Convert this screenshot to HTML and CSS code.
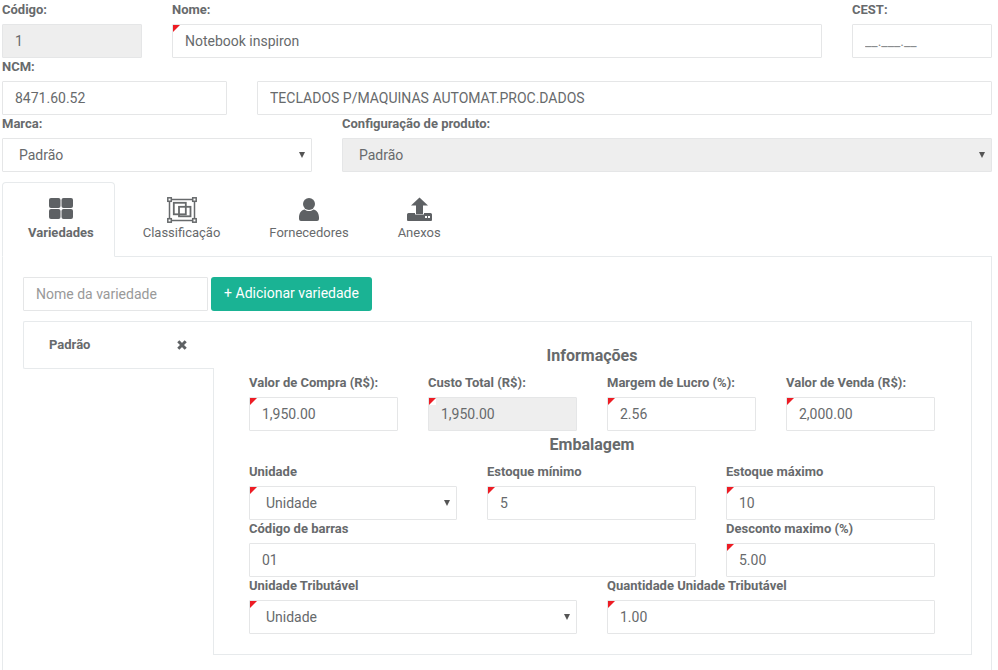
FILE: index.html
```html
<!DOCTYPE html>
<html lang="pt">
<head>
<meta charset="utf-8">
<title>Produto</title>
<link rel="stylesheet" href="styles.css">
</head>
<body>
<div class="row r1">
  <div class="field"><label>Código:</label><input class="ctl off" value="1" disabled></div>
  <div class="field req"><label>Nome:</label><input class="ctl" value="Notebook inspiron"></div>
  <div class="field"><label>CEST:</label><input class="ctl mask" value="__.___.__"></div>
</div>
<div class="row r2">
  <div class="field"><label>NCM:</label><input class="ctl" value="8471.60.52"></div>
  <div class="field"><label>&nbsp;</label><input class="ctl" value="TECLADOS P/MAQUINAS AUTOMAT.PROC.DADOS"></div>
</div>
<div class="row r3">
  <div class="field"><label>Marca:</label><div class="sel"><select class="ctl"><option>Padrão</option></select></div></div>
  <div class="field"><label>Configuração de produto:</label><div class="sel"><select class="ctl off" disabled><option>Padrão</option></select></div></div>
</div>

<div class="tabs">
  <div class="tab active">
    <svg class="ico" width="24" height="27" viewBox="0 0 24 27"><rect y="1" width="11.500" height="10" rx="2"/><rect x="12.500" y="1" width="11.500" height="10" rx="2"/><rect y="12" width="11.500" height="10" rx="2"/><rect x="12.500" y="12" width="11.500" height="10" rx="2"/></svg>
    <span>Variedades</span>
  </div>
  <div class="tab">
    <svg class="ico" width="30" height="27" viewBox="0 0 30 27"><g fill="none" stroke="#676a6c" stroke-width="1.500"><rect x="2.500" y="2.500" width="25" height="21"/><rect x="6.800" y="5.800" width="12" height="11.500" stroke-width="1.800"/><rect x="12" y="9.800" width="11.500" height="9.500" stroke-width="1.800"/><g fill="#fff" stroke-width="1.500"><rect x="0.800" y="0.800" width="3.500" height="3.500"/><rect x="25.700" y="0.800" width="3.500" height="3.500"/><rect x="0.800" y="21.700" width="3.500" height="3.500"/><rect x="25.700" y="21.700" width="3.500" height="3.500"/></g></g></svg>
    <span>Classificação</span>
  </div>
  <div class="tab">
    <svg class="ico" width="20" height="27" viewBox="0 0 20 27"><circle cx="10" cy="7" r="6"/><path d="M0 20.500c0-4.500 2.500-7.500 5.800-8 1.200 1 2.600 1.500 4.200 1.500s3-.5 4.200-1.500c3.300.5 5.800 3.500 5.800 8v1.500q0 2-2 2h-16q-2 0-2-2z"/></svg>
    <span>Fornecedores</span>
  </div>
  <div class="tab">
    <svg class="ico" width="25" height="27" viewBox="0 0 25 27"><path d="M12.500 .5l8.500 8h-5v8.500h-7v-8.500h-5z"/><path fill-rule="evenodd" d="M0 17.500q0-1.500 1.500-1.500h6.500v1.500h9v-1.500h6.500q1.500 0 1.500 1.500v5.500q0 1-1 1h-23q-1 0-1-1zM18 19h2v2h-2zM21 19h2v2h-2z"/></svg>
    <span>Anexos</span>
  </div>
</div>

<section class="pane">
  <div class="adder">
    <input class="ctl name" placeholder="Nome da variedade">
    <button class="add">+ Adicionar variedade</button>
  </div>
  <div class="variety">
    <div class="vside">
      <div class="vtab"><b>Padrão</b><svg class="x" width="10" height="10" viewBox="0 0 10 10"><path d="M1.300 1.300l7.400 7.400M8.700 1.300l-7.400 7.400"/></svg></div>
    </div>
    <div class="vbody">
      <h4>Informações</h4>
      <div class="g4">
        <div class="field req"><label>Valor de Compra (R$):</label><input class="ctl" value="1,950.00"></div>
        <div class="field req notch"><label>Custo Total (R$):</label><input class="ctl off" value="1,950.00" disabled></div>
        <div class="field req"><label>Margem de Lucro (%):</label><input class="ctl" value="2.56"></div>
        <div class="field req"><label>Valor de Venda (R$):</label><input class="ctl" value="2,000.00"></div>
      </div>
      <h4 class="h2">Embalagem</h4>
      <div class="g3">
        <div class="field req"><label>Unidade</label><div class="sel"><select class="ctl"><option>Unidade</option></select></div></div>
        <div class="field req"><label>Estoque mínimo</label><input class="ctl" value="5"></div>
        <div class="field req"><label>Estoque máximo</label><input class="ctl" value="10"></div>
        <div class="field wide"><label>Código de barras</label><input class="ctl" value="01"></div>
        <div class="field req"><label>Desconto maximo (%)</label><input class="ctl" value="5.00"></div>
      </div>
      <div class="g2">
        <div class="field req"><label>Unidade Tributável</label><div class="sel"><select class="ctl"><option>Unidade</option></select></div></div>
        <div class="field req"><label>Quantidade Unidade Tributável</label><input class="ctl" value="1.00"></div>
      </div>
    </div>
  </div>
</section>
</body>
</html>
```
FILE: styles.css
```css
* { box-sizing: border-box; }
html, body { margin: 0; padding: 0; }
body {
  width: 998px;
  height: 670px;
  overflow: hidden;
  padding: 1px 6px 0 2px;
  background: #fff;
  color: #676a6c;
  font-family: Roboto, "Liberation Sans", sans-serif;
  font-size: 14px;
}
.row { display: grid; column-gap: 30px; }
.r1 { grid-template-columns: 140px 650px 140px; }
.r2 { grid-template-columns: 225px 735px; }
.r3 { grid-template-columns: 310px 650px; }
.field { position: relative; min-width: 0; }
label {
  display: block;
  height: 23px;
  line-height: 18px;
  font-size: 13px;
  font-weight: 700;
  color: #676a6c;
}
.ctl {
  display: block;
  width: 100%;
  height: 34px;
  margin: 0;
  padding: 6px 12px;
  border: 1px solid #e5e6e7;
  border-radius: 1px;
  background: #fff;
  color: #676a6c;
  font: 14px Roboto, "Liberation Sans", sans-serif;
  outline: none;
  opacity: 1;
}
.ctl::placeholder { color: #999; }
.mask { color: #8a8d8f; }
.off { background: #eee; }
.sel { position: relative; }
.sel select { appearance: none; padding-left: 16px; }
.sel::after {
  content: "";
  position: absolute;
  right: 7px;
  top: 14px;
  border-style: solid;
  border-width: 6px 3px 0;
  border-color: #555 transparent transparent;
}
.req::after {
  content: "";
  position: absolute;
  left: 1px;
  top: 24px;
  border-style: solid;
  border-width: 7px 7px 0 0;
  border-color: #ed1c24 transparent transparent transparent;
}
.notch { isolation: isolate; }
.notch::before {
  content: "";
  position: absolute;
  z-index: 0;
  left: 1px;
  top: 24px;
  width: 7px;
  height: 7px;
  background: #fff;
}
.notch input { position: relative; z-index: -1; }
.tabs { display: flex; margin-top: 10px; height: 74px; }
.tab {
  display: flex;
  flex-direction: column;
  align-items: center;
  height: 75px;
  padding: 14px 23.500px 0;
  border: 1px solid transparent;
  font-size: 13px;
  color: #676a6c;
  position: relative;
}
.tab.active {
  padding: 14px 20px 0 25px;
  margin-right: 3.500px;
  background: #fff;
  border-color: #e7eaec #e7eaec #fff;
  border-radius: 4px 4px 0 0;
  font-weight: 700;
  z-index: 1;
}
.ico { display: block; fill: #5e6164; }
.tab span { display: block; margin-top: 1px; line-height: 16px; }
.pane {
  border: 1px solid #e7eaec;
  border-bottom: 0;
  padding: 20px 20px 0;
  height: 414px;
}
.adder { display: flex; gap: 3px; }
.name { width: 185px; }
.add {
  width: 161px;
  height: 34px;
  padding: 0 0 2px;
  border: 0;
  border-radius: 3px;
  background: #1ab394;
  color: #fff;
  font: 14px Roboto, "Liberation Sans", sans-serif;
}
.variety { display: flex; margin-top: 10px; width: 949px; }
.vside { width: 191px; flex: none; position: relative; z-index: 1; }
.vtab {
  display: flex;
  justify-content: space-between;
  align-items: flex-start;
  height: 48px;
  width: 191px;
  padding: 15px 27px 0 25px;
  border: 1px solid #e7eaec;
  border-right: 0;
  border-radius: 2px 0 0 2px;
  background: #fff;
  font-size: 13px;
  line-height: 16px;
}
.x { margin-top: 3px; fill: none; stroke: #5e6164; stroke-width: 3; }
.vbody {
  flex: 1;
  height: 334px;
  margin-left: -1px;
  padding: 24px 35px 0;
  border: 1px solid #e7eaec;
}
h4 {
  margin: 0;
  height: 20px;
  padding-right: 1px;
  line-height: 20px;
  font-size: 16px;
  font-weight: 700;
  text-align: center;
  color: #676a6c;
}
.h2 { margin-top: 4px; height: 22px; }
.g4 { display: grid; grid-template-columns: repeat(4, 149px); column-gap: 30px; margin-top: 8px; }
.g3 { display: grid; grid-template-columns: 208px 209px 209px; column-gap: 30px; margin-top: 6px; }
.g3 .wide { grid-column: span 2; }
.g2 { display: grid; grid-template-columns: 328px 328px; column-gap: 30px; }
```
